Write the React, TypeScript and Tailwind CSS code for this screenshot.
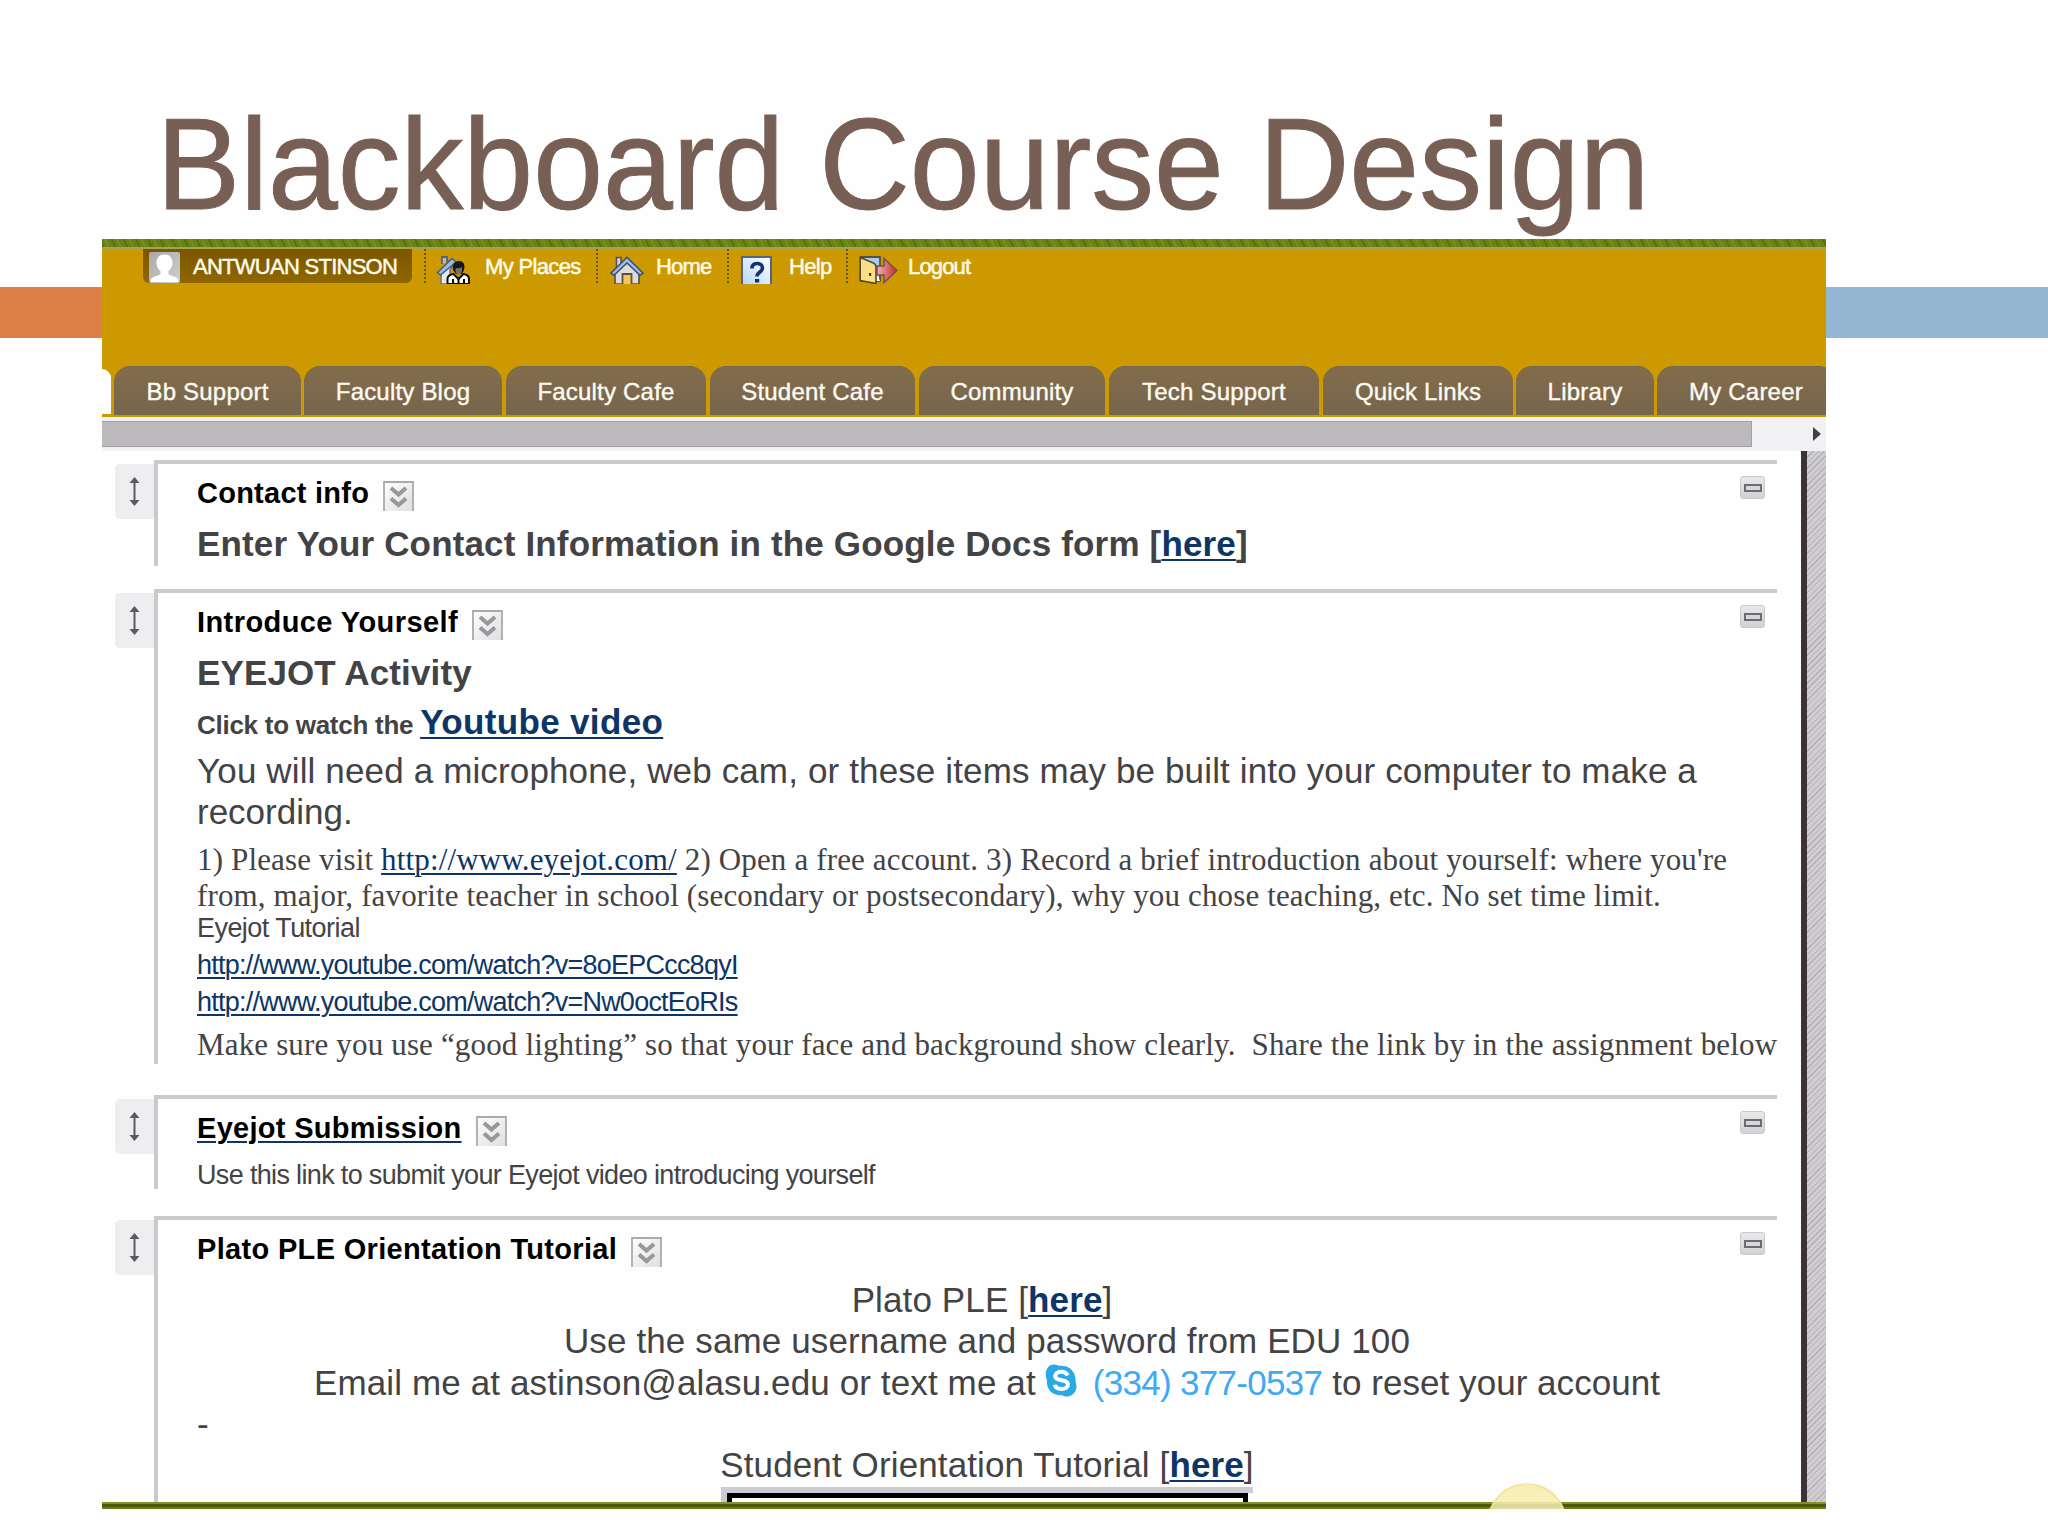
import React from "react";

function AvatarIcon() {
  return (
    <svg width="31" height="31" viewBox="0 0 31 31">
      <defs>
        <linearGradient id="avatar" x1="0" y1="0" x2="1" y2="1">
          <stop offset="0" stopColor="#a9a9a9" />
          <stop offset="1" stopColor="#cfcfcf" />
        </linearGradient>
      </defs>
      <rect width="31" height="31" rx="2" fill="url(#avatar)" />
      <path d="M15.5 2.5c5 0 8 3.4 8 8 0 3.600-1.600 6.600-4 8.500v3c1.500 2 7.500 2.500 9 4.500 .8 1.200 .8 2.500 .8 3.500H1.700c0-1 0-2.300 .8-3.500 1.500-2 7.500-2.500 9-4.500v-3c-2.400-1.900-4-4.900-4-8.500 0-4.600 3-8 8-8z" fill="#fff" />
    </svg>
  );
}

function PlacesIcon() {
  return (
    <svg width="34" height="28" viewBox="0 0 34 28">
      <path d="M5 15v13h9V14l4-7-5-2z" fill="#e9e9ec" stroke="#6a7078" strokeWidth="1.500" />
      <path d="M6 8V1h5v5" fill="#b9bec6" stroke="#5c626c" strokeWidth="1.800" />
      <path d="M1.500 16.500 16 2.500l4 3.500L4.500 19z" fill="#9dbde6" stroke="#3f5f86" strokeWidth="1.500" />
      <path d="M17 14c-1-6 2-9 6-9s6.500 3 5 9l-2 4h-6z" fill="#15171a" />
      <path d="M19.500 12c1.500 .5 5 .5 6.500-1V14c0 3-1.500 4.500-3.300 4.500S19.500 17 19.500 14z" fill="#77716b" />
      <path d="M11.500 28v-5c0-3 3-4.500 6-5l5 5 5-5c3 .5 5.500 2 5.500 5v5z" fill="#fff" stroke="#0b0c0e" strokeWidth="2" />
      <path d="M17 28v-5M28 28v-5M22.500 23v5" stroke="#0b0c0e" strokeWidth="2" />
    </svg>
  );
}

function HomeIcon() {
  return (
    <svg width="34" height="28" viewBox="0 0 34 28">
      <path d="M6.500 12V1.500h4.500V8" fill="#d6d9df" stroke="#4c5564" strokeWidth="1.600" />
      <path d="M5 16v12h24V16L17 4z" fill="#dcdcda" stroke="#4c4f55" strokeWidth="1.600" />
      <path d="M1 17 17 1.200 33 17l-3 2.300L17 7 4 19.300z" fill="#9fb9e6" stroke="#3c4c6b" strokeWidth="1.500" />
      <path d="M12.500 28V18h9v10" fill="#f5c65a" stroke="#5b5340" strokeWidth="1.800" />
    </svg>
  );
}

function HelpIcon() {
  return (
    <svg width="31" height="28" viewBox="0 0 31 28">
      <defs>
        <linearGradient id="help" x1="1" y1="0" x2="0" y2="1">
          <stop offset="0" stopColor="#fff" />
          <stop offset="1" stopColor="#b9d4fa" />
        </linearGradient>
      </defs>
      <path d="M1 28V1h29v27" fill="url(#help)" stroke="#56657d" strokeWidth="2" />
      <path d="M11 12.500c0-3.500 2-5 5-5s5.500 1.500 5.500 4.500c0 4-5.500 4-5.500 8.500" fill="none" stroke="#10346e" strokeWidth="3.600" />
      <rect x="14" y="23" width="4.200" height="3.500" fill="#10346e" />
    </svg>
  );
}

function LogoutIcon() {
  return (
    <svg width="39" height="28" viewBox="0 0 39 28">
      <defs>
        <linearGradient id="exit" x1="0" y1="0" x2="1" y2="0">
          <stop offset="0" stopColor="#f1b3b0" />
          <stop offset="1" stopColor="#c22a2c" />
        </linearGradient>
      </defs>
      <path d="M2 1h19v24H2z" fill="#a5cdf6" stroke="#56503c" strokeWidth="1.800" />
      <path d="M17 14 21 25h-4z" fill="#fff" />
      <path d="M1.200 1.500 12 6c3 1 5 2 5 5v16.500L1.200 24.500z" fill="#fbdf84" stroke="#54482a" strokeWidth="1.600" />
      <rect x="10" y="17" width="2.200" height="3" fill="#4a3b18" />
      <path d="M18 10h7V2.500L38 14.500 25 26.500V19h-7z" fill="url(#exit)" stroke="#7b4a4c" strokeWidth="1.500" />
    </svg>
  );
}

function SkypeIcon() {
  return (
    <svg width="33" height="33" viewBox="0 0 33 33" className="shrink-0">
      <path d="M9 .5c2.500 0 4 .8 5.500 1.500C24 .8 31.500 8 30.500 18c3 6-1 14.500-8.500 14.500-2 0-3.500-.6-5-1.300C8 32 1 25.500 2 16.500-1 9.500 1.500 .5 9 .5z" fill="#2aaae4" />
      <path d="M22.500 11.500c-1-2.700-3.500-3.700-6.300-3.700-3.200 0-6 1.500-6 4.200 0 5.800 12.800 2.800 12.800 8.500 0 3-3 4.500-6.500 4.500-3.200 0-6-1.200-6.800-4.200" fill="none" stroke="#fff" strokeWidth="4" />
    </svg>
  );
}

function MoveHandle() {
  return (
    <div className="mt-1 flex h-[55px] w-[39px] shrink-0 justify-center rounded-l-[5px] bg-[#eeedef] pt-[13px]">
      <svg width="11" height="29" viewBox="0 0 11 29">
        <path d="M5.500 3v23" stroke="#5b5a5e" strokeWidth="2" />
        <path d="M5.500 0 10.500 6h-10zM5.500 29l5-6h-10z" fill="#5b5a5e" />
      </svg>
    </div>
  );
}

function MenuButton() {
  return (
    <svg width="31" height="30" viewBox="0 0 31 30" className="shrink-0">
      <defs>
        <linearGradient id="menu" x1="0" y1="0" x2="1" y2="1">
          <stop offset="0" stopColor="#fff" />
          <stop offset="1" stopColor="#dedde0" />
        </linearGradient>
      </defs>
      <path d="M1 30V1h29v29" fill="url(#menu)" stroke="#aaa9ac" strokeWidth="1.800" />
      <path d="m8 7 7.500 6.500L23 7M8 17.500l7.500 6.500 7.500-6.500" fill="none" stroke="#98979a" strokeWidth="4" />
    </svg>
  );
}

function CollapseButton() {
  return (
    <div className="mt-3 mr-3 flex h-[23px] w-[25px] shrink-0 items-center justify-center rounded-[3px] border border-[#c9c8cb] bg-linear-to-b from-[#e9e8eb] to-[#d2d1d4]">
      <div className="h-[8px] w-[18px] border-2 border-[#6d6c70] bg-[#d8d7da]" />
    </div>
  );
}

type SectionProps = {
  size: string;
  title: string;
  titleClass: string;
  children: React.ReactNode;
};

function Section({ size, title, titleClass, children }: SectionProps) {
  return (
    <section className={`flex pl-[13px] ${size}`}>
      <MoveHandle />
      <div className="w-[1623px] border-t-4 border-l-4 border-[#cac9cc] text-[#434345]">
        <div className="flex justify-between">
          <h2 className="mt-[7px] flex pl-[39px] text-[29px] leading-[44px] font-bold text-black">
            <span className={titleClass}>{title}</span>
            <span className="mt-[10px] ml-[14px]">
              <MenuButton />
            </span>
          </h2>
          <CollapseButton />
        </div>
        <div className="pl-[39px] whitespace-nowrap">{children}</div>
      </div>
    </section>
  );
}

function Link({ children, className = "" }: { children: React.ReactNode; className?: string }) {
  return (
    <a className={`text-[#0d3566] underline decoration-2 underline-offset-[3px] ${className}`}>{children}</a>
  );
}

const tabs = [
  { label: "Bb Support", width: "w-[187px] mr-[3px]" },
  { label: "Faculty Blog", width: "w-[198px] mr-[4px]" },
  { label: "Faculty Cafe", width: "w-[200px] mr-[4px]" },
  { label: "Student Cafe", width: "w-[205px] mr-[4px]" },
  { label: "Community", width: "w-[186px] mr-[4px]" },
  { label: "Tech Support", width: "w-[210px] mr-[4px]" },
  { label: "Quick Links", width: "w-[190px] mr-[3px]" },
  { label: "Library", width: "w-[138px] mr-[3px]" },
  { label: "My Career", width: "w-[178px]" },
];

function Banner() {
  return (
    <header className="flex h-[178px] flex-col bg-[#cc9900]">
      <div className="h-[8px] shrink-0 bg-[#6b8312] bg-[repeating-linear-gradient(65deg,#587210_0_2px,transparent_2px_5px,#768e20_5px_7px,transparent_7px_11px)]" />
      <div className="h-[2px] shrink-0 bg-[#a8a258]" />
      <nav className="flex h-[35px] shrink-0 pl-[41px] text-[22px] leading-[35px] whitespace-nowrap text-[#fffbe8]">
        <div className="flex h-[34px] w-[269px] items-end rounded-b-[6px] bg-linear-to-b from-[#7a5600] to-[#8f6700] pl-[6px]">
          <AvatarIcon />
          <span className="ml-[13px] h-[34px] tracking-[-0.73px] [-webkit-text-stroke:0.5px]">ANTWUAN STINSON</span>
        </div>
        <div className="ml-[12px] flex h-[34px] w-[172px] border-l-2 border-dotted border-[#6a5418] pt-[7px] pl-[10px]">
          <PlacesIcon />
          <span className="-mt-[7px] ml-[15px] tracking-[-0.65px] [-webkit-text-stroke:0.5px]">My Places</span>
        </div>
        <div className="flex h-[34px] w-[131px] border-l-2 border-dotted border-[#6a5418] pt-[7px] pl-[12px]">
          <HomeIcon />
          <span className="-mt-[7px] ml-[12px] tracking-[-0.8px] [-webkit-text-stroke:0.5px]">Home</span>
        </div>
        <div className="flex h-[34px] w-[119px] border-l-2 border-dotted border-[#6a5418] pt-[7px] pl-[12px]">
          <HelpIcon />
          <span className="-mt-[7px] ml-[17px] tracking-[-0.67px] [-webkit-text-stroke:0.5px]">Help</span>
        </div>
        <div className="flex h-[34px] border-l-2 border-dotted border-[#6a5418] pt-[7px] pl-[11px]">
          <LogoutIcon />
          <span className="-mt-[7px] ml-[10px] tracking-[-0.84px] [-webkit-text-stroke:0.5px]">Logout</span>
        </div>
      </nav>
      <div className="mt-auto flex h-[51px] overflow-hidden">
        <div className="mt-[3px] mr-[3px] h-[45px] w-[9px] shrink-0 rounded-tr-[10px] bg-white" />
        {tabs.map((tab) => (
          <div
            key={tab.label}
            className={`h-[49px] shrink-0 rounded-t-[16px] border-t border-[#75694d] bg-linear-to-b from-[#826c4b] to-[#77664d] text-center text-[24px] leading-[49px] tracking-[0.2px] whitespace-nowrap text-[#fdfaf0] [-webkit-text-stroke:0.4px] ${tab.width}`}
          >
            {tab.label}
          </div>
        ))}
      </div>
    </header>
  );
}

function ScrollBar() {
  return (
    <div className="flex h-[34px] items-start bg-[#f1f0f2] pt-[4px]">
      <div className="h-[26px] w-[1650px] border-y border-r border-[#a09fa2] bg-[#bcbabd]" />
      <svg width="8" height="14" viewBox="0 0 8 14" className="mt-[6px] ml-[61px]">
        <path d="M0 0 8 7 0 14z" fill="#403f43" />
      </svg>
    </div>
  );
}

export default function App() {
  return (
    <div className="h-[1536px] w-[2048px] overflow-hidden bg-[#fefefe] font-['Liberation_Sans',Arial,sans-serif]">
      <h1 className="h-[239px] origin-left scale-x-[0.9655] pt-[90px] pl-[162px] text-[130px] leading-[148px] whitespace-nowrap text-[#775f55] [-webkit-text-stroke:1px]">
        Blackboard Course Design
      </h1>
      <div className="flex">
        <div className="mt-[48px] h-[51px] w-[102px] shrink-0 bg-[#dd8047]" />
        <main className="relative h-[1270px] w-[1724px] shrink-0 overflow-hidden">
          <Banner />
          <ScrollBar />
          <div className="flex h-[1051px]">
            <div className="w-[1699px] shrink-0 overflow-hidden pt-[9px]">
              <Section size="h-[106px]" title="Contact info" titleClass="tracking-[0.25px]">
                <p className="mt-[6px] text-[35px] leading-[46px] font-bold tracking-[0.16px]">
                  Enter Your Contact Information in the Google Docs form [<Link>here</Link>]
                </p>
              </Section>

              <Section size="-mt-px pt-6 h-[499px]" title="Introduce Yourself" titleClass="tracking-[0.42px]">
                <p className="mt-[6px] text-[35px] leading-[46px] font-bold tracking-[0.12px]">EYEJOT Activity</p>
                <p className="mt-[3px] h-[46px] text-[35px] leading-[46px] font-bold">
                  <span className="text-[26px] tracking-[-0.27px]">Click to watch the </span>
                  <Link className="tracking-[0.35px]">Youtube video</Link>
                </p>
                <p className="mt-[5px] text-[35px] leading-[41px] tracking-[0.14px]">
                  You will need a microphone, web cam, or these items may be built into your computer to make a
                  <br />
                  <span className="tracking-[0px]">recording.</span>
                </p>
                <p className="mt-[10px] font-['Liberation_Serif',serif] text-[31px] leading-[36px] tracking-[0.15px]">
                  1) Please visit <Link>http://www.eyejot.com/</Link> 2) Open a free account. 3) Record a brief
                  introduction about yourself: where you're
                  <br />
                  <span className="tracking-[0.14px]">
                    from, major, favorite teacher in school (secondary or postsecondary), why you chose teaching, etc.
                    No set time limit.
                  </span>
                </p>
                <p className="text-[27px] leading-[28px] tracking-[-0.55px]">Eyejot Tutorial</p>
                <p className="mt-[5px] text-[27px] leading-[37px] tracking-[-0.76px]">
                  <Link>http://www.youtube.com/watch?v=8oEPCcc8qyI</Link>
                  <br />
                  <Link>http://www.youtube.com/watch?v=Nw0octEoRIs</Link>
                </p>
                <p className="mt-[4px] font-['Liberation_Serif',serif] text-[31px] leading-[40px] tracking-[0.16px]">
                  Make sure you use “good lighting” so that your face and background show clearly.&nbsp; Share the link
                  by in the assignment below
                </p>
              </Section>

              <Section
                size="mt-[31px] h-[94px]"
                title="Eyejot Submission"
                titleClass="tracking-[0.3px] underline decoration-[#0d3566] decoration-2 underline-offset-[3px]"
              >
                <p className="mt-[9px] text-[27px] leading-[32px] tracking-[-0.66px]">
                  Use this link to submit your Eyejot video introducing yourself
                </p>
              </Section>

              <Section size="mt-[27px] h-[286px]" title="Plato PLE Orientation Tutorial" titleClass="tracking-[0.33px]">
                <div className="mt-[8px] text-center text-[35px] leading-[41.25px] tracking-[0.12px]">
                  <p className="pr-[10px]">
                    Plato PLE [<Link className="font-bold">here</Link>]
                  </p>
                  <p>Use the same username and password from EDU 100</p>
                  <p className="flex justify-center">
                    <span>Email me at astinson@alasu.edu or text me at</span>
                    <span className="mt-[2px] ml-[9px] h-[33px]">
                      <SkypeIcon />
                    </span>
                    <span className="ml-[15px] tracking-[-0.7px] text-[#3fa9f5]">(334) 377-0537</span>
                    <span className="ml-[10px] tracking-[0.04px]">to reset your account</span>
                  </p>
                  <p className="text-left">-</p>
                  <p className="tracking-[0.12px]">
                    Student Orientation Tutorial [<Link className="font-bold">here</Link>]
                  </p>
                </div>
                <div className="mt-[2px] ml-[524px] h-[20px] w-[532px] border-t-[6px] border-l-[6px] border-[#cccbd3] pr-[5px]">
                  <div className="h-full border-x-[5px] border-t-[5px] border-black bg-white" />
                </div>
              </Section>
            </div>
            <div className="w-[6px] bg-[#3a3339]" />
            <div className="flex-1 bg-[#cfcdd0] bg-[repeating-linear-gradient(135deg,#b3b1b5_0_1px,#cfcdd0_1px_4px)]" />
          </div>
          <div className="h-[7px] border-t-2 border-b-2 border-t-[#84912a] border-b-[#6b7a1c] bg-[#4b5a06]" />
          <div className="absolute top-[1244px] left-[1385px] h-[80px] w-[80px] rounded-full border-2 border-[#efe08a]/60 bg-linear-to-b from-[#f6edaa]/90 to-[#fbf8d8]/70" />
        </main>
        <div className="mt-[48px] h-[51px] w-[222px] shrink-0 bg-[#94b6d2]" />
      </div>
    </div>
  );
}
